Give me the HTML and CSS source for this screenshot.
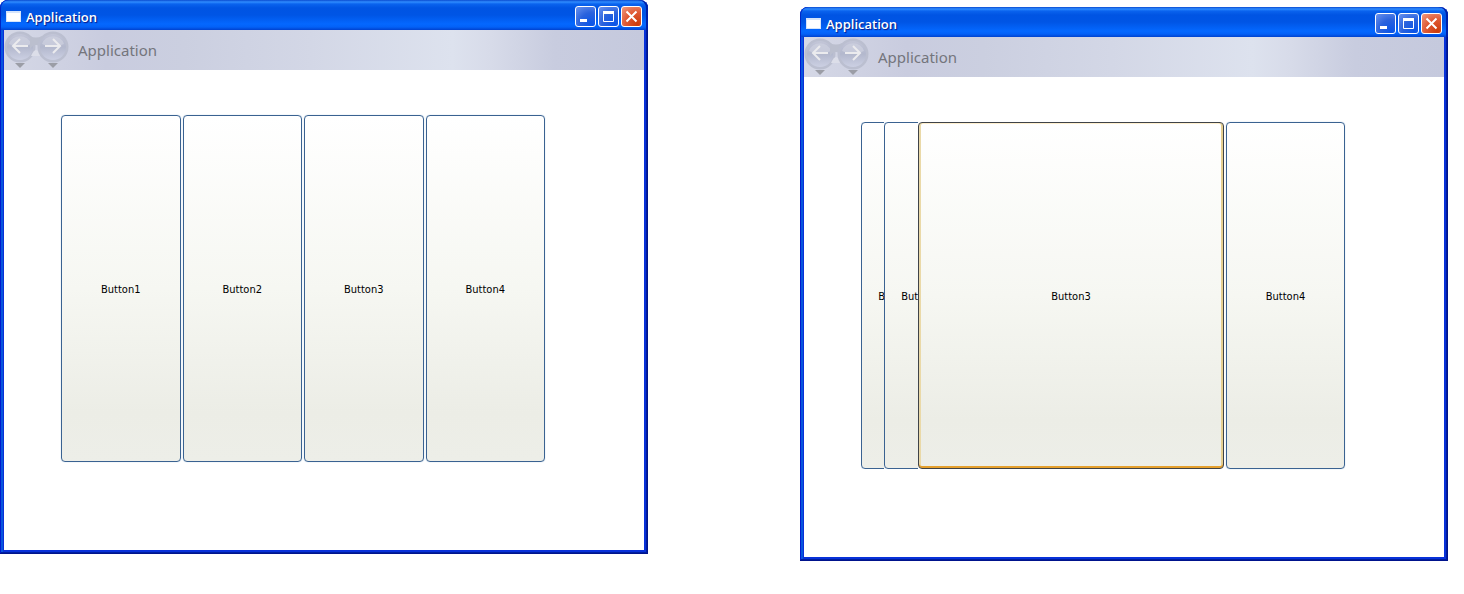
FILE: index.html
```
<!DOCTYPE html>
<html lang="en">
<head>
<meta charset="utf-8">
<title>Application</title>
<link rel="stylesheet" href="styles.css">
</head>
<body>
<svg class="defs" width="0" height="0" aria-hidden="true">
  <defs>
    <linearGradient id="disc-fill" x1="0" y1="0" x2="0" y2="1">
      <stop offset="0" stop-color="#c3c6d8"/><stop offset=".5" stop-color="#b3b8cd"/><stop offset="1" stop-color="#ccd0e3"/>
    </linearGradient>
    <symbol id="disc" viewBox="0 0 32 40">
      <circle cx="16" cy="17" r="15.500" fill="#bbbfd0"/>
      <circle cx="16" cy="17" r="13" fill="url(#disc-fill)"/>
      <path d="M5 14a11.500 11 0 0 1 22 0q-11 5-22 0" fill="#cfd2e0" opacity=".7"/>
      <path d="M11 33h10l-5 5z" fill="#9b9da6"/>
    </symbol>
    <symbol id="back" viewBox="0 0 32 40">
      <use href="#disc" width="32" height="40"/>
      <path d="M24 16H9M16 9 9 16l7 7" fill="none" stroke="#ebebee" stroke-width="2"/>
    </symbol>
    <symbol id="forward" viewBox="0 0 32 40">
      <use href="#disc" width="32" height="40"/>
      <path d="M8 16h15M16 9l7 7-7 7" fill="none" stroke="#ebebee" stroke-width="2"/>
    </symbol>
    <symbol id="bridge" viewBox="0 0 12 40">
      <path d="M0 6q6 3 12 0v13q-6-8-12 0z" fill="#bbbfce"/><path d="M1 26q5-12 10 0z" fill="#dcdee9"/>
    </symbol>
  </defs>
</svg>
<main class="desktop">
  <section class="window">
    <header class="titlebar">
      <span class="app-icon"></span>
      <h1 class="title">Application</h1>
      <button class="caption" aria-label="Minimize"><svg viewBox="0 0 19 19"><path d="M4 13.500h7" stroke="#fff" stroke-width="3"/></svg></button>
      <button class="caption" aria-label="Maximize"><svg viewBox="0 0 19 19"><path d="M4.500 5v9.500h10V5" fill="none" stroke="#fff"/><path d="M4 5.500h11" stroke="#fff" stroke-width="3"/></svg></button>
      <button class="caption close" aria-label="Close"><svg viewBox="0 0 19 19"><path d="m4.500 4.500 10 10m0-10-10 10" stroke="#fff" stroke-width="2"/></svg></button>
    </header>
    <nav class="toolbar">
      <button class="nav" aria-label="Back"><svg viewBox="0 0 32 40"><use href="#back"/></svg></button>
      <svg class="bridge" viewBox="0 0 12 40" aria-hidden="true"><use href="#bridge"/></svg>
      <button class="nav" aria-label="Forward"><svg viewBox="0 0 32 40"><use href="#forward"/></svg></button>
      <span class="page-name">Application</span>
    </nav>
    <div class="stage even">
      <button class="tile">Button1</button>
      <button class="tile">Button2</button>
      <button class="tile">Button3</button>
      <button class="tile">Button4</button>
    </div>
  </section>
  <section class="window lowered">
    <header class="titlebar">
      <span class="app-icon"></span>
      <h1 class="title">Application</h1>
      <button class="caption" aria-label="Minimize"><svg viewBox="0 0 19 19"><path d="M4 13.500h7" stroke="#fff" stroke-width="3"/></svg></button>
      <button class="caption" aria-label="Maximize"><svg viewBox="0 0 19 19"><path d="M4.500 5v9.500h10V5" fill="none" stroke="#fff"/><path d="M4 5.500h11" stroke="#fff" stroke-width="3"/></svg></button>
      <button class="caption close" aria-label="Close"><svg viewBox="0 0 19 19"><path d="m4.500 4.500 10 10m0-10-10 10" stroke="#fff" stroke-width="2"/></svg></button>
    </header>
    <nav class="toolbar">
      <button class="nav" aria-label="Back"><svg viewBox="0 0 32 40"><use href="#back"/></svg></button>
      <svg class="bridge" viewBox="0 0 12 40" aria-hidden="true"><use href="#bridge"/></svg>
      <button class="nav" aria-label="Forward"><svg viewBox="0 0 32 40"><use href="#forward"/></svg></button>
      <span class="page-name">Application</span>
    </nav>
    <div class="stage expanded">
      <div class="slot"><button class="tile covered">Button1</button></div>
      <div class="slot"><button class="tile covered">Button2</button></div>
      <button class="tile hot">Button3</button>
      <button class="tile last">Button4</button>
    </div>
  </section>
</main>
</body>
</html>
```
FILE: styles.css
```
* { box-sizing: border-box; }
body {
  margin: 0;
  background: #fff;
  font-family: "DejaVu Sans Condensed", "DejaVu Sans", sans-serif;
}
button { padding: 0; border: 0; background: none; font: inherit; }
svg { display: block; }
.defs { position: absolute; }
.desktop {
  display: grid;
  grid-template-columns: 1fr 1fr;
  gap: 152px;
  align-items: start;
  padding-right: 16px;
}
.window {
  padding: 0 4px 4px;
  background: #0831d9;
  border-radius: 8px 8px 0 0;
  box-shadow: inset -1px -1px #00138c, inset 1px 0 #0019cf, inset -2px -2px #001ea0, inset 3px 0 #0855dd;
  overflow: hidden;
}
.lowered { margin-top: 7px; }
.titlebar {
  display: flex;
  align-items: center;
  gap: 2px;
  height: 30px;
  margin: 0 -4px;
  padding: 3px 6px 0;
  background: linear-gradient(#0a4bd0 0, #2f8cff 2px, #0a63ee 4px, #0054e3 8px, #0055e5 15px, #0468ff 24px, #0361f7 27px, #0042cf 30px);
  border-radius: 8px 8px 0 0;
  box-shadow: inset 1px 0 #0026c4, inset -2px 0 #0020a8;
}
.app-icon {
  width: 15px;
  height: 11px;
  background: #fff;
  border: 1px solid #d5e4fb;
  border-top-width: 2px;
}
.title {
  flex: 1;
  margin: 0;
  padding-left: 3px;
  color: #fff;
  font: 600 13px/20px "Open Sans", sans-serif;
  text-shadow: 1px 1px 1px #0a1883;
}
.caption {
  width: 21px;
  height: 21px;
  border: 1px solid #fff;
  border-radius: 3px;
  background: radial-gradient(circle at 80% 90%, #0a55e8, #2a62dd 50%, #6b93ee);
}
.close { background: radial-gradient(circle at 80% 90%, #cc3c0c, #df5833 50%, #ef9a80); }
.toolbar {
  display: flex;
  height: 40px;
  background: linear-gradient(90deg, #d5d8e6 0, #c9ccdf 16%, #cbcfe0 28%, #d3d7e6 48%, #dde2ee 70%, #d7dbe9 76%, #c8ccdf 86%, #c5c9dd 100%);
}
.nav { width: 32px; height: 40px; }
.bridge { width: 12px; height: 40px; margin: 0 -5px 0 -6px; }
.page-name {
  padding-left: 9px;
  color: #74757c;
  font: 15px/40px "Noto Sans", sans-serif;
}
.stage {
  display: grid;
  grid-template-rows: 347px;
  padding: 45px 99px 88px 57px;
  background: #fff;
}
.even { grid-template-columns: repeat(4, 1fr); column-gap: 2px; }
.expanded { grid-template-columns: 23px 34px 1fr 121px; }
.tile {
  padding-top: 2px;
  border: 1px solid #3a6291;
  border-radius: 4px;
  background: linear-gradient(#fff, #f6f7f2 50%, #ecede6 86%, #edeee8);
  box-shadow: 0 0 1px #8fb4d6;
  color: #000;
  font-size: 11px;
  line-height: 16px;
}
.slot { overflow: hidden; }
.covered { width: 74px; height: 100%; }
.last { margin-left: 2px; }
.hot {
  border-color: #3f4348;
  box-shadow: inset 0 -2px #e5a02d, inset 2px 0 #ead9a8, inset -2px 0 #e5cf91, inset 0 1px #fff0cf;
}
```
